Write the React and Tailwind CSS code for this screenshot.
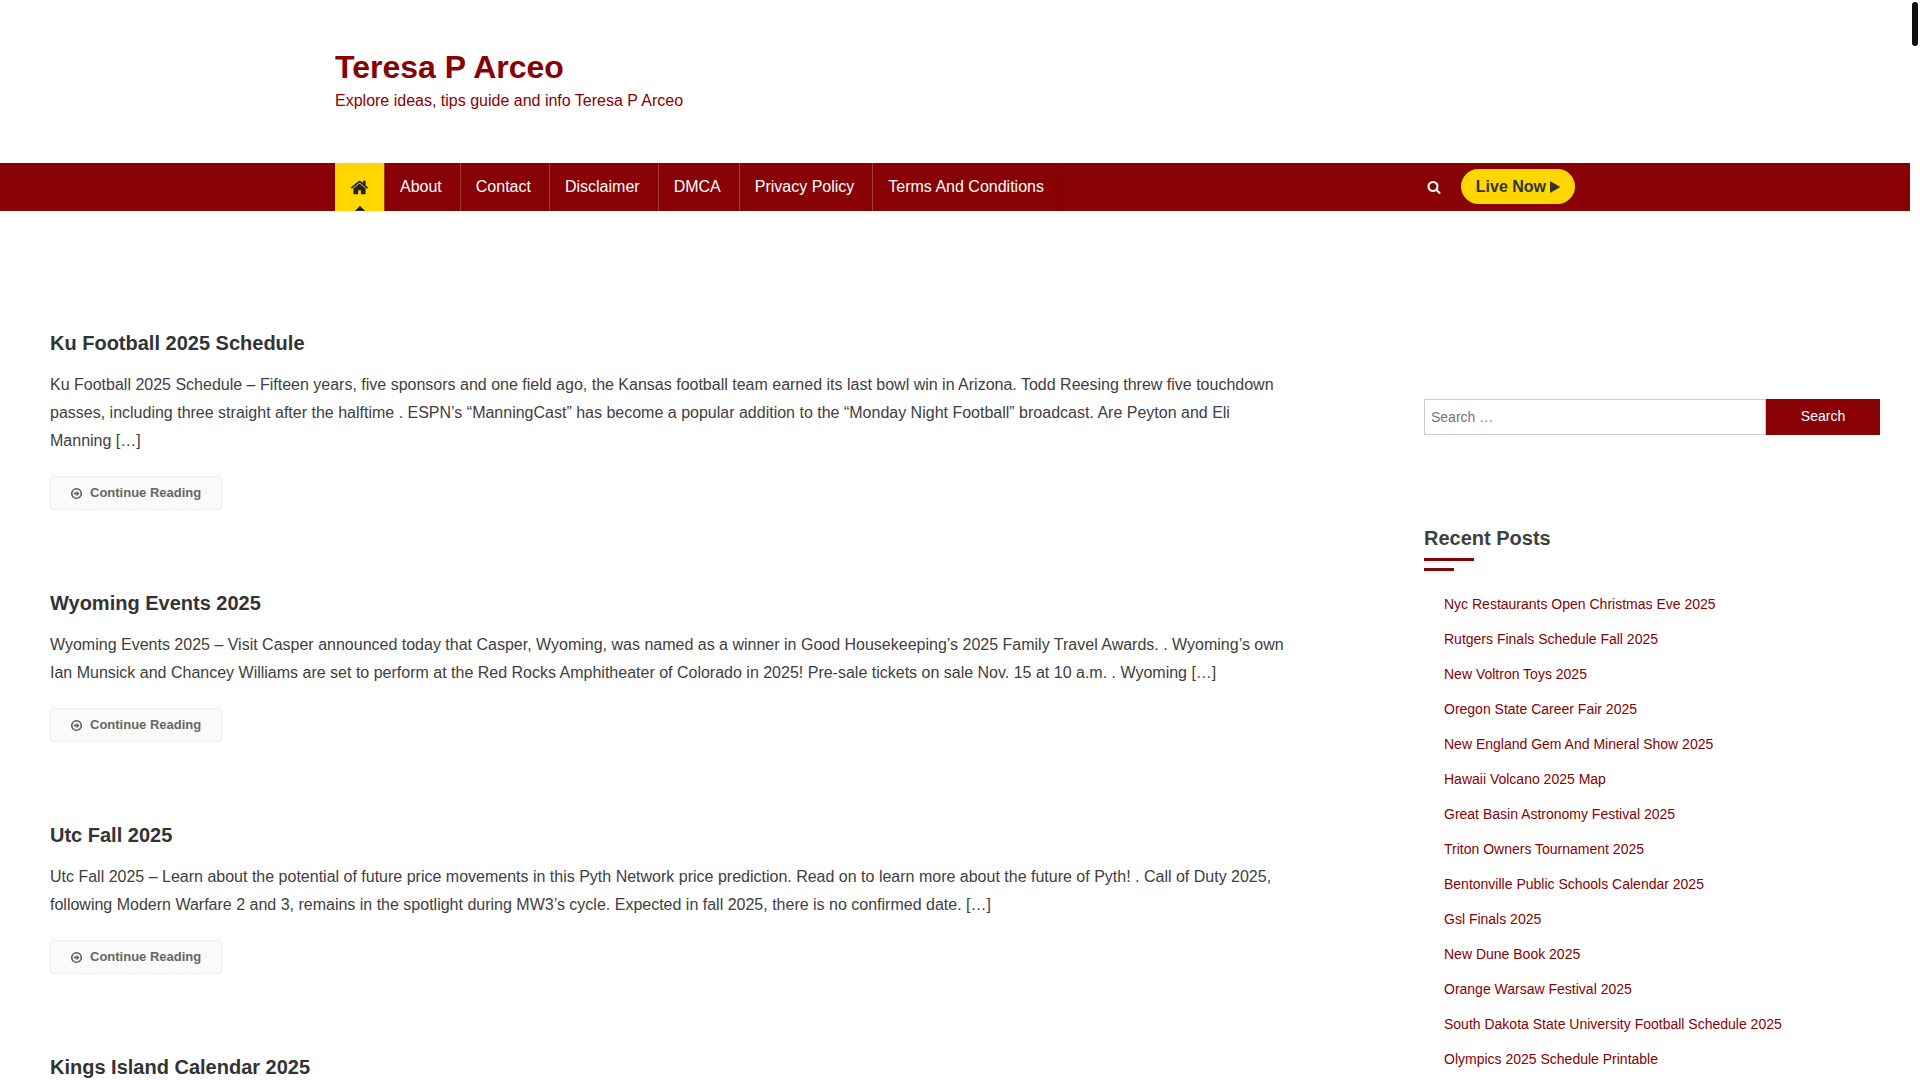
import React from 'react';
import clsx from 'clsx';

const NAV_ITEMS = ['About', 'Contact', 'Disclaimer', 'DMCA', 'Privacy Policy', 'Terms And Conditions'];

const POSTS = [
  {
    title: 'Ku Football 2025 Schedule',
    excerpt:
      'Ku Football 2025 Schedule – Fifteen years, five sponsors and one field ago, the Kansas football team earned its last bowl win in Arizona. Todd Reesing threw five touchdown passes, including three straight after the halftime . ESPN’s “ManningCast” has become a popular addition to the “Monday Night Football” broadcast. Are Peyton and Eli Manning […]',
  },
  {
    title: 'Wyoming Events 2025',
    excerpt:
      'Wyoming Events 2025 – Visit Casper announced today that Casper, Wyoming, was named as a winner in Good Housekeeping’s 2025 Family Travel Awards. . Wyoming’s own Ian Munsick and Chancey Williams are set to perform at the Red Rocks Amphitheater of Colorado in 2025! Pre-sale tickets on sale Nov. 15 at 10 a.m. . Wyoming […]',
  },
  {
    title: 'Utc Fall 2025',
    excerpt:
      'Utc Fall 2025 – Learn about the potential of future price movements in this Pyth Network price prediction. Read on to learn more about the future of Pyth! . Call of Duty 2025, following Modern Warfare 2 and 3, remains in the spotlight during MW3’s cycle. Expected in fall 2025, there is no confirmed date. […]',
  },
  { title: 'Kings Island Calendar 2025' },
];

const RECENT_POSTS = [
  'Nyc Restaurants Open Christmas Eve 2025',
  'Rutgers Finals Schedule Fall 2025',
  'New Voltron Toys 2025',
  'Oregon State Career Fair 2025',
  'New England Gem And Mineral Show 2025',
  'Hawaii Volcano 2025 Map',
  'Great Basin Astronomy Festival 2025',
  'Triton Owners Tournament 2025',
  'Bentonville Public Schools Calendar 2025',
  'Gsl Finals 2025',
  'New Dune Book 2025',
  'Orange Warsaw Festival 2025',
  'South Dakota State University Football Schedule 2025',
  'Olympics 2025 Schedule Printable',
];

const ICONS = {
  home: 'M1472 992v480q0 26-19 45t-45 19h-384v-384h-256v384h-384q-26 0-45-19t-19-45v-480q0-1 .5-3t.5-3l575-474 575 474q1 2 1 6zm223-69l-62 74q-8 9-21 11h-3q-13 0-21-7l-692-577-692 577q-12 8-24 7-13-2-21-11l-62-74q-8-10-7-23.5t11-21.5l719-599q32-26 76-26t76 26l244 204v-195q0-14 9-23t23-9h192q14 0 23 9t9 23v408l219 182q10 8 11 21.5t-7 23.5z',
  search:
    'M1216 832q0-185-131.5-316.5t-316.5-131.5-316.5 131.5-131.5 316.5 131.5 316.5 316.5 131.5 316.5-131.5 131.5-316.5zm512 832q0 52-38 90t-90 38q-54 0-90-38l-343-342q-179 124-399 124-143 0-273.5-55.5t-225-150-150-225-55.5-273.5 55.5-273.5 150-225 225-150 273.5-55.5 273.5 55.5 225 150 150 225 55.5 273.5q0 220-124 399l343 343q37 37 37 90z',
  arrow:
    'M1285 896q0 13-10 23l-320 320q-9 9-23 9-13 0-22.5-9.5t-9.5-22.5v-192h-352q-13 0-22.5-9.5t-9.5-22.5v-192q0-13 9.5-22.5t22.5-9.5h352v-192q0-14 9-23t23-9q12 0 24 10l319 319q9 9 9 23zm155 0q0-148-73-273t-198-198-273-73-273 73-198 198-73 273 73 273 198 198 273 73 273-73 198-198 73-273zm224 0q0 209-103 385.5t-279.5 279.5-385.5 103-385.5-103-279.5-279.5-103-385.5 103-385.5 279.5-279.5 385.5-103 385.5 103 279.5 279.5 103 385.5z',
};

function Icon({ name, className }) {
  return (
    <svg viewBox="0 0 1792 1792" fill="currentColor" className={clsx('shrink-0', className)} aria-hidden>
      <path d={ICONS[name]} />
    </svg>
  );
}

function Navigation() {
  return (
    <nav className="bg-[#870105]">
      <div className="mx-auto flex h-12 max-w-[1240px] items-center justify-between">
        <ul className="flex h-full">
          <li className="relative bg-[#ffd700] text-[#222]">
            <a href="#home" aria-label="Home" className="flex h-full items-center px-[15px]">
              <Icon name="home" className="h-[19px] w-[19px]" />
            </a>
            <svg
              viewBox="0 0 10 5"
              fill="currentColor"
              className="absolute bottom-0 left-1/2 h-[5px] w-[10px] -translate-x-1/2"
              aria-hidden
            >
              <path d="M0 5 4.3.5Q5-.1 5.7.5L10 5z" />
            </svg>
          </li>
          {NAV_ITEMS.map((item) => (
            <li key={item} className="border-r border-l border-r-[#7b0105] border-l-[#a23a3d]">
              <a href="#page" className="flex h-full items-center pr-[17px] pl-[15px] text-base text-white">
                {item}
              </a>
            </li>
          ))}
        </ul>
        <div className="flex items-center gap-5 pb-px">
          <button type="button" aria-label="Search" className="text-white">
            <Icon name="search" className="h-[14px] w-[14px]" />
          </button>
          <a
            href="#live"
            className="flex h-[35px] items-center gap-1 rounded-full bg-[#ffd700] px-[15px] text-base font-bold text-[#333]"
          >
            Live Now
            <svg viewBox="0 0 10 12" fill="currentColor" className="h-3 w-[10px]" aria-hidden>
              <path d="M0 .8Q0 0 .8.4L9.6 5.6Q10 6 9.6 6.4L.8 11.6Q0 12 0 11.2z" />
            </svg>
          </a>
        </div>
      </div>
    </nav>
  );
}

function Post({ title, excerpt }) {
  return (
    <article className="mb-[78px]">
      <h2 className="text-xl leading-[30px] font-bold text-[#333]">
        <a href="#post">{title}</a>
      </h2>
      {excerpt && (
        <>
          <p className="mt-[13px] text-base leading-[28px] text-[#404040]">{excerpt}</p>
          <a
            href="#post"
            className="mt-[21px] inline-flex h-[34px] items-center gap-[7px] rounded-[3px] border border-[#ececec] bg-[#fafafa] pr-5 pl-[19px] align-top text-[13px] font-bold text-[#666]"
          >
            <Icon name="arrow" className="h-[13px] w-[13px]" />
            Continue Reading
          </a>
        </>
      )}
    </article>
  );
}

function Sidebar() {
  return (
    <aside className="w-[456px] shrink-0 pt-[71px]">
      <form className="flex h-9" onSubmit={(e) => e.preventDefault()}>
        <input
          type="search"
          aria-label="Search for"
          placeholder="Search …"
          className="min-w-0 flex-1 border border-[#ccc] px-1.5 text-sm text-[#666] placeholder-[#757575] outline-none"
        />
        <button type="submit" className="w-[114px] bg-[#870105] pb-0.5 text-sm text-white">
          Search
        </button>
      </form>

      <h2 className="mt-[88px] text-xl leading-[30px] font-bold text-[#404040]">Recent Posts</h2>
      <div className="mt-[5px] h-[3px] w-[50px] bg-[#870105]" />
      <div className="mt-[7px] h-[3px] w-[30px] bg-[#870105]" />
      <ul className="mt-4 pl-5 text-sm leading-[35px] text-[#870105]">
        {RECENT_POSTS.map((post) => (
          <li key={post}>
            <a href="#post">{post}</a>
          </li>
        ))}
      </ul>
    </aside>
  );
}

export default function App() {
  return (
    <div className="flex h-screen overflow-hidden bg-white font-['Liberation_Sans',Arial,sans-serif]">
      <div className="min-w-0 flex-1">
        <header>
          <div className="mx-auto max-w-[1240px] pt-[45px] pb-[50px] text-[#870105]">
            <h1 className="text-[32px] leading-[44px] font-bold">
              <a href="#home">Teresa P Arceo</a>
            </h1>
            <p className="text-base leading-6">Explore ideas, tips guide and info Teresa P Arceo</p>
          </div>
          <Navigation />
        </header>
        <div className="flex justify-between pt-[117px] pr-[30px] pl-[50px]">
          <main className="w-[68%]">
            {POSTS.map((post) => (
              <Post key={post.title} {...post} />
            ))}
          </main>
          <Sidebar />
        </div>
      </div>
      {/* scrollbar gutter with its thumb */}
      <div className="w-[10px] shrink-0 px-0.5 py-0.5">
        <div className="h-11 rounded-full bg-[#111]" />
      </div>
    </div>
  );
}
